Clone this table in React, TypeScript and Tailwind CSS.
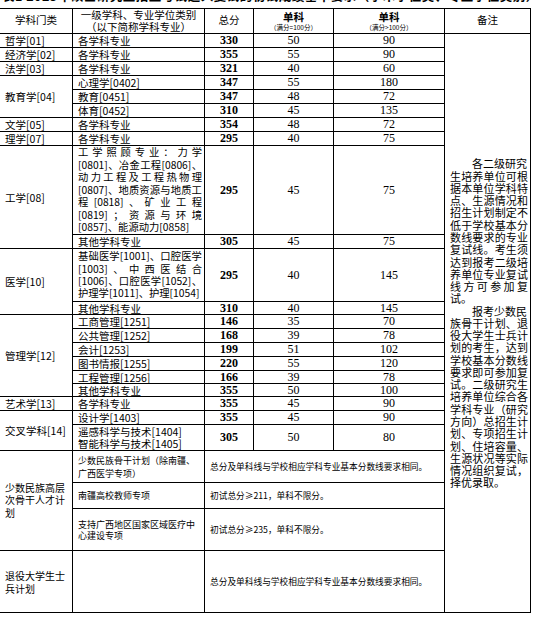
import React from "react";

const cjk = "font-['Noto_Sans_CJK_SC',sans-serif]";
const serif = "font-['Liberation_Serif','Noto_Sans_CJK_SC',serif]";

function Cell({ className = "", children }: { className?: string; children?: React.ReactNode }) {
  return <div className={"bg-white min-w-0 " + className}>{children}</div>;
}

const Label = ({ children, className = "" }: { children: React.ReactNode; className?: string }) => (
  <Cell className={"flex items-center pl-[5px] text-[10.5px] leading-[13px] " + className}>{children}</Cell>
);

const Subj = ({ children }: { children: React.ReactNode }) => (
  <Cell className="flex items-center pl-[5px] text-[10.5px] leading-[13px] whitespace-nowrap">{children}</Cell>
);

const Total = ({ v }: { v: string }) => (
  <Cell className={"flex items-center justify-center text-[12px] leading-[13px] font-bold " + serif}>{v}</Cell>
);

const Score = ({ v }: { v: string }) => (
  <Cell className={"flex items-center justify-center text-[12px] leading-[13px] " + serif}>{v}</Cell>
);

// justified line (last line of a block is spread too)
const JL = ({ children, className = "" }: { children: React.ReactNode; className?: string }) => (
  <div className={"text-justify [text-align-last:justify] " + className}>{children}</div>
);

// spread one line over the cell width, keeping codes like [0801] together
const Spread = ({ text }: { text: string }) => (
  <div className="flex justify-between whitespace-nowrap">
    {(text.match(/\[\d+\]|./g) || []).map((t, i) => (
      <span key={i}>{t}</span>
    ))}
  </div>
);

const notes1 = ["生培养单位可根", "据本单位学科特", "点、生源情况和", "招生计划制定不", "低于学校基本分", "数线要求的专业", "复试线。考生须", "达到报考二级培", "养单位专业复试", "线方可参加复"];
const notes2 = ["族骨干计划、退", "役大学生士兵计", "划的考生，达到", "学校基本分数线", "要求即可参加复", "试。二级研究生", "培养单位综合各", "学科专业（研究", "方向）总招生计", "划、专项招生计", "划、住培容量、", "生源状况等实际", "情况组织复试，"];

export default function App() {
  return (
    <div className={"min-h-screen w-[538px] overflow-hidden bg-white text-black " + cjk}>
      {/* cut-off heading above the table */}
      <div className="h-[8px] overflow-hidden">
        <div className="-mt-[11px] whitespace-nowrap pl-[2px] text-[12.5px] font-bold leading-[14px] tracking-[0.5px]">
          表1 2025年硕士研究生招生考试进入复试的初试成绩基本要求（学术学位类、专业学位类别）
        </div>
      </div>

      <div className="-ml-px grid w-fit grid-cols-[72px_131px_48px_79px_110px_85px] grid-rows-[24px_13px_13px_13px_13px_13px_13px_13px_13px_88px_13px_52px_12px_13px_13px_13px_13px_12px_12px_13px_13px_25px_31px_25px_41px_61px] gap-px bg-black p-px">
        {/* header */}
        <Cell className="flex items-center justify-center pb-[2px] text-[10.5px]">学科门类</Cell>
        <Cell className="flex flex-col items-center justify-center text-[10.5px] leading-[12px]">
          <div>一级学科、专业学位类别</div>
          <div>（以下简称学科专业）</div>
        </Cell>
        <Cell className="flex items-center justify-center pb-[2px] text-[10.5px]">总分</Cell>
        <Cell className="flex flex-col items-center justify-center">
          <div className="text-[10.5px] font-bold leading-[12px]">单科</div>
          <div className="text-[6.5px] leading-[9px]">（满分=100分）</div>
        </Cell>
        <Cell className="flex flex-col items-center justify-center">
          <div className="text-[10.5px] font-bold leading-[12px]">单科</div>
          <div className="text-[6.5px] leading-[9px]">（满分&gt;100分）</div>
        </Cell>
        <Cell className="flex items-center justify-center pb-[2px] text-[10.5px]">备注</Cell>

        {/* 哲学 */}
        <Label>哲学[01]</Label>
        <Subj>各学科专业</Subj>
        <Total v="330" />
        <Score v="50" />
        <Score v="90" />
        <Cell className="row-span-25 flex flex-col justify-center pl-[5px] pr-[2px] text-[11px] leading-[12.27px]">
          <div className="indent-[22px]">各二级研究</div>
          {notes1.map((l) => (
            <JL key={l}>{l}</JL>
          ))}
          <div>试。</div>
          <div className="indent-[22px]">报考少数民</div>
          {notes2.map((l) => (
            <JL key={l}>{l}</JL>
          ))}
          <div>择优录取。</div>
        </Cell>

        <Label>经济学[02]</Label>
        <Subj>各学科专业</Subj>
        <Total v="355" />
        <Score v="55" />
        <Score v="90" />

        <Label>法学[03]</Label>
        <Subj>各学科专业</Subj>
        <Total v="321" />
        <Score v="40" />
        <Score v="60" />

        {/* 教育学 */}
        <Label className="row-span-3">教育学[04]</Label>
        <Subj>心理学[0402]</Subj>
        <Total v="347" />
        <Score v="55" />
        <Score v="180" />
        <Subj>教育[0451]</Subj>
        <Total v="347" />
        <Score v="48" />
        <Score v="72" />
        <Subj>体育[0452]</Subj>
        <Total v="310" />
        <Score v="45" />
        <Score v="135" />

        <Label>文学[05]</Label>
        <Subj>各学科专业</Subj>
        <Total v="354" />
        <Score v="48" />
        <Score v="72" />

        <Label>理学[07]</Label>
        <Subj>各学科专业</Subj>
        <Total v="295" />
        <Score v="40" />
        <Score v="75" />

        {/* 工学 */}
        <Label className="row-span-2">工学[08]</Label>
        <Cell className="flex flex-col justify-center pl-[5px] pr-[2px] text-[10.3px] leading-[12.5px]">
          <Spread text="工学照顾专业：力学" />
          <Spread text="[0801]、冶金工程[0806]、" />
          <Spread text="动力工程及工程热物理" />
          <Spread text="[0807]、地质资源与地质工" />
          <Spread text="程[0818]、矿业工程" />
          <Spread text="[0819]；资源与环境" />
          <div className="whitespace-nowrap">[0857]、能源动力[0858]</div>
        </Cell>
        <Total v="295" />
        <Score v="45" />
        <Score v="75" />
        <Subj>其他学科专业</Subj>
        <Total v="305" />
        <Score v="45" />
        <Score v="75" />

        {/* 医学 */}
        <Label className="row-span-2">医学[10]</Label>
        <Cell className="flex flex-col justify-center pl-[5px] pr-[2px] text-[10.3px] leading-[12.3px]">
          <Spread text="基础医学[1001]、口腔医学" />
          <Spread text="[1003]、中西医结合" />
          <Spread text="[1006]、口腔医学[1052]、" />
          <div className="whitespace-nowrap">护理学[1011]、护理[1054]</div>
        </Cell>
        <Total v="295" />
        <Score v="40" />
        <Score v="145" />
        <Subj>其他学科专业</Subj>
        <Total v="310" />
        <Score v="40" />
        <Score v="145" />

        {/* 管理学 */}
        <Label className="row-span-6">管理学[12]</Label>
        <Subj>工商管理[1251]</Subj>
        <Total v="146" />
        <Score v="35" />
        <Score v="70" />
        <Subj>公共管理[1252]</Subj>
        <Total v="168" />
        <Score v="39" />
        <Score v="78" />
        <Subj>会计[1253]</Subj>
        <Total v="199" />
        <Score v="51" />
        <Score v="102" />
        <Subj>图书情报[1255]</Subj>
        <Total v="220" />
        <Score v="55" />
        <Score v="120" />
        <Subj>工程管理[1256]</Subj>
        <Total v="166" />
        <Score v="39" />
        <Score v="78" />
        <Subj>其他学科专业</Subj>
        <Total v="355" />
        <Score v="50" />
        <Score v="100" />

        <Label>艺术学[13]</Label>
        <Subj>各学科专业</Subj>
        <Total v="355" />
        <Score v="45" />
        <Score v="90" />

        {/* 交叉学科 */}
        <Label className="row-span-2">交叉学科[14]</Label>
        <Subj>设计学[1403]</Subj>
        <Total v="355" />
        <Score v="45" />
        <Score v="90" />
        <Cell className="flex flex-col justify-center pl-[5px] text-[10.5px] leading-[12px]">
          <div>遥感科学与技术[1404]</div>
          <div>智能科学与技术[1405]</div>
        </Cell>
        <Total v="305" />
        <Score v="50" />
        <Score v="80" />

        {/* 专项计划 */}
        <Cell className="row-span-3 flex items-center pl-[5px] pr-[2px] text-[10px] leading-[12.5px]">
          少数民族高层次骨干人才计划
        </Cell>
        <Cell className="flex items-center pl-[5px] pr-[4px] text-[9px] leading-[13px]">
          少数民族骨干计划（除南疆、广西医学专项）
        </Cell>
        <Cell className="col-span-3 flex items-center pl-[5px] text-[8.7px] leading-[12px]">
          总分及单科线与学校相应学科专业基本分数线要求相同。
        </Cell>
        <Cell className="flex items-center pl-[5px] text-[9px] leading-[12px]">南疆高校教师专项</Cell>
        <Cell className="col-span-3 flex items-center pl-[5px] text-[8.7px] leading-[12px]">
          初试总分≥211，单科不限分。
        </Cell>
        <Cell className="flex items-center pl-[5px] pr-[4px] text-[9px] leading-[11px]">
          支持广西地区国家区域医疗中心建设专项
        </Cell>
        <Cell className="col-span-3 flex items-center pl-[5px] text-[8.7px] leading-[12px]">
          初试总分≥235，单科不限分。
        </Cell>

        <Cell className="flex items-center pl-[5px] pr-[2px] text-[10px] leading-[13px]">退役大学生士兵计划</Cell>
        <Cell />
        <Cell className="col-span-3 flex items-center pl-[5px] text-[8.7px] leading-[12px]">
          总分及单科线与学校相应学科专业基本分数线要求相同。
        </Cell>
      </div>
    </div>
  );
}
